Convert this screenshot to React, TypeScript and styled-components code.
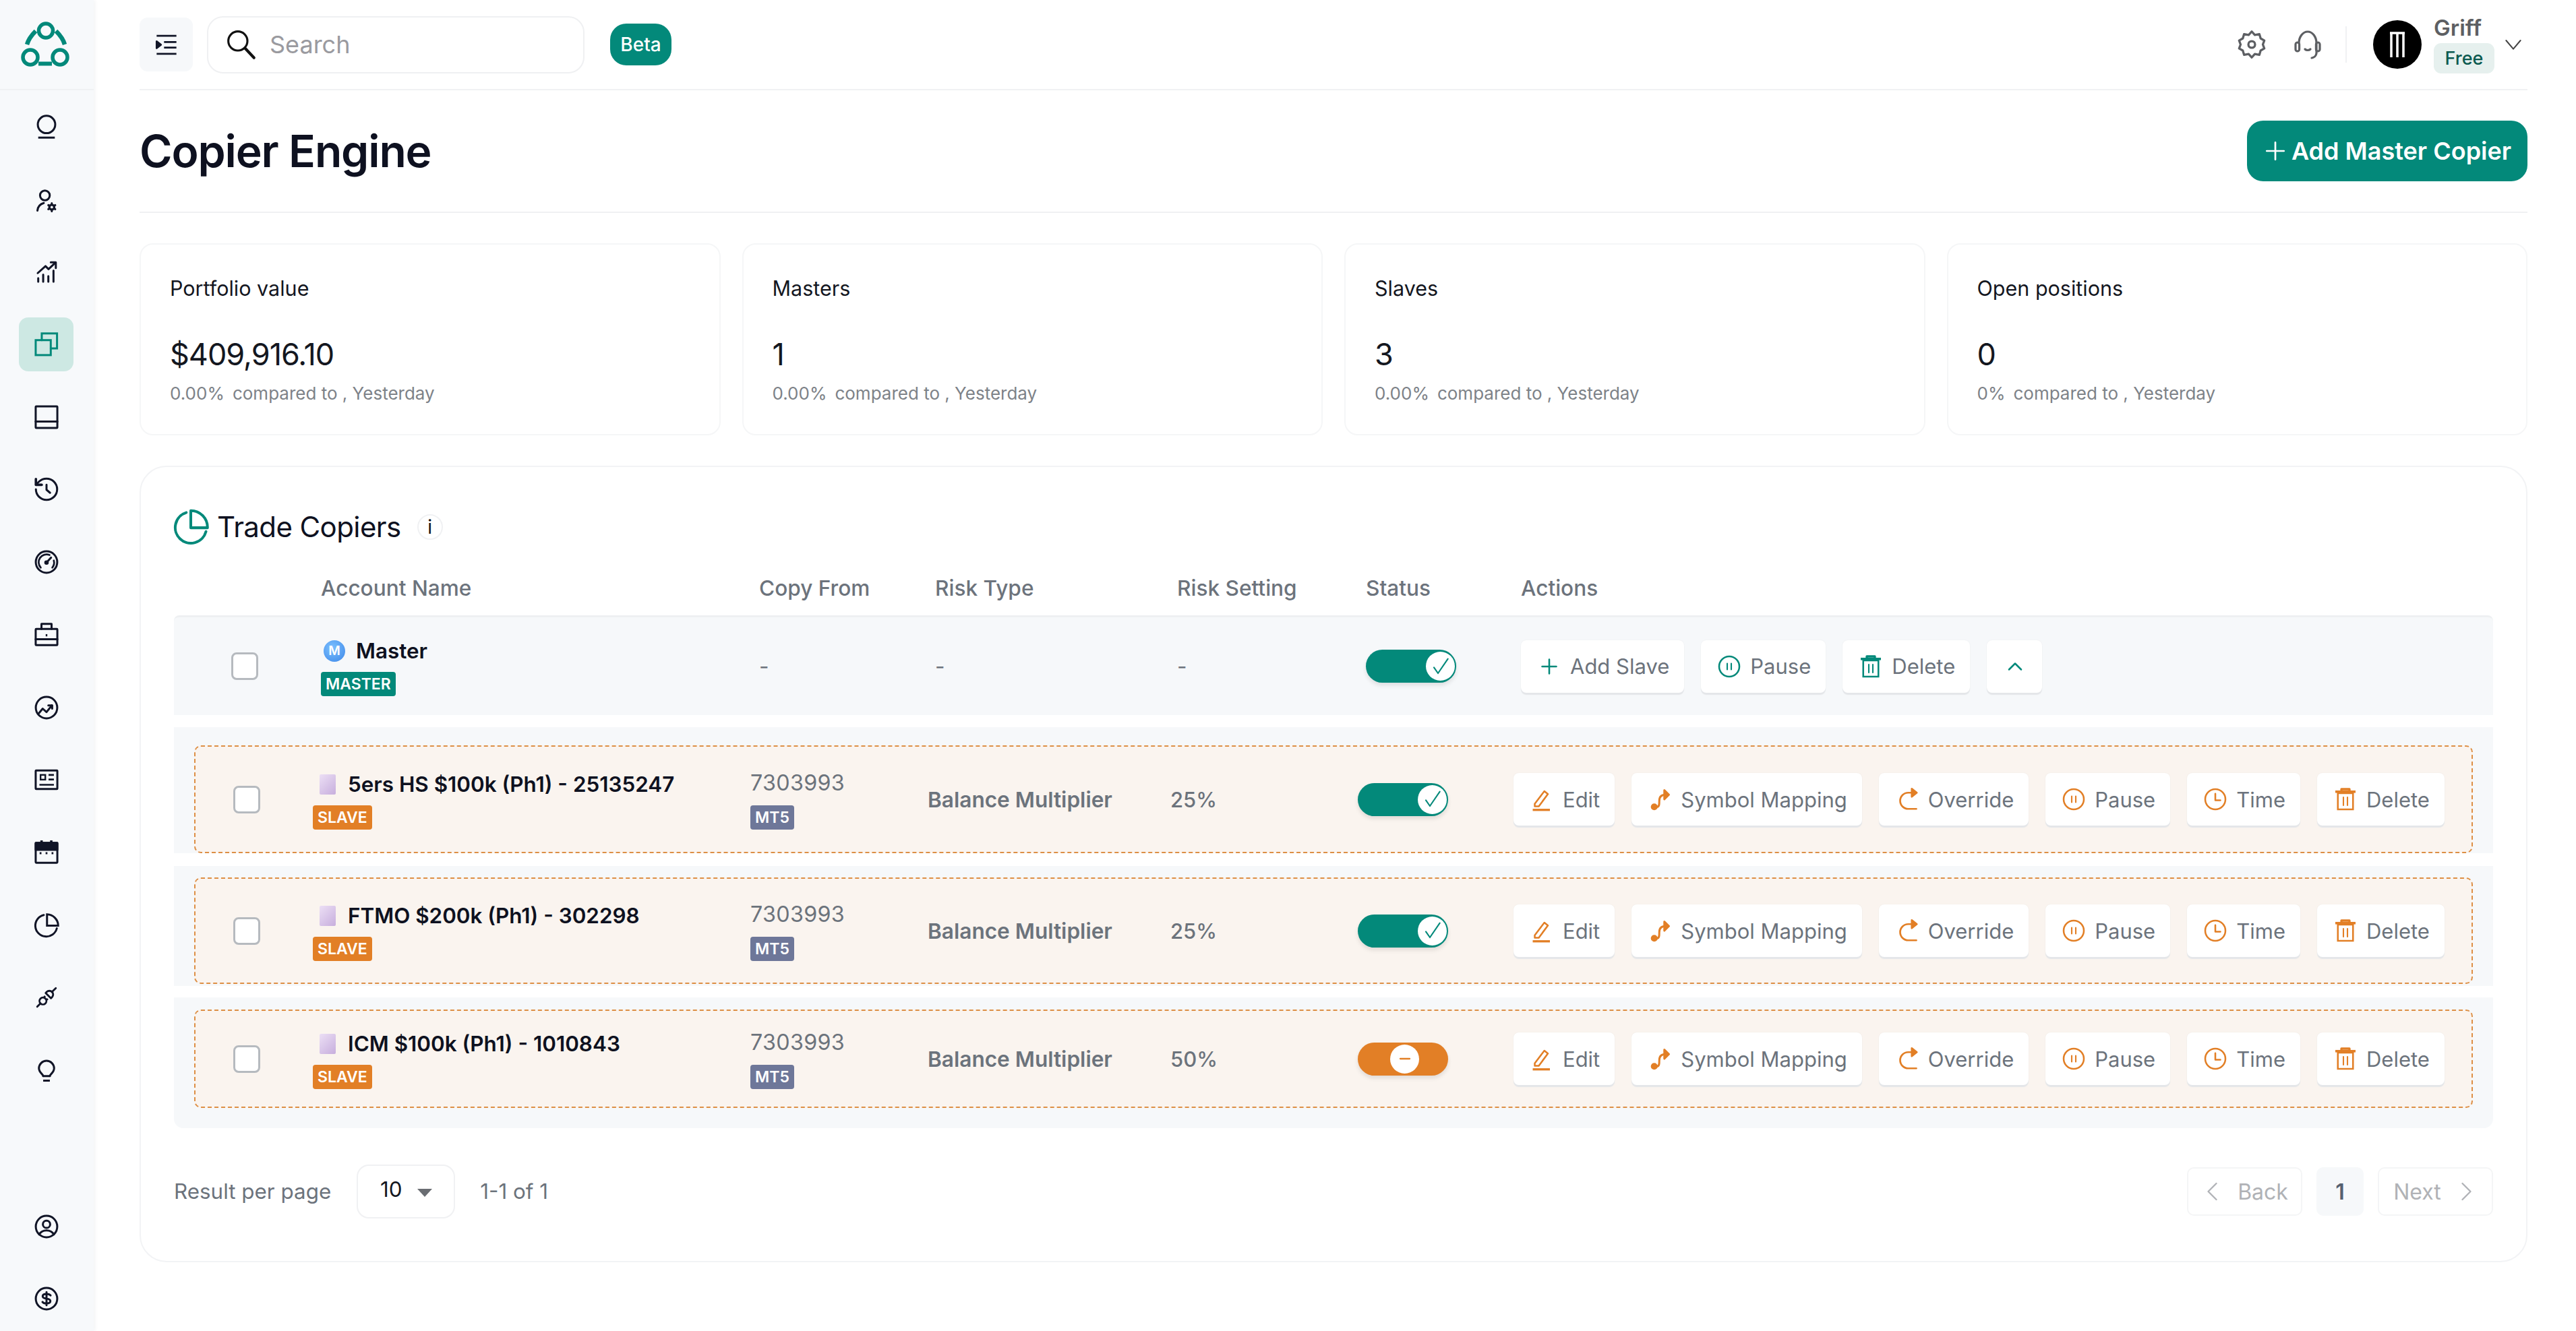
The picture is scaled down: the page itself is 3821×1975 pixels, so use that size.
import React from "react";
import styled, { createGlobalStyle } from "styled-components";

const TEAL = "#03897a";
const ORANGE = "#e27f26";
const INK = "#0e1120";
const MUTED = "#6c737c";

const Global = createGlobalStyle`
  html, body { margin: 0; padding: 0; background: #fff; }
  body { font-family: Inter, "Liberation Sans", sans-serif; color: ${INK}; }
  * { box-sizing: border-box; }
`;

const Page = styled.div`
  display: flex;
  width: 3821px;
  height: 1975px;
  overflow: hidden;
`;

const Sidebar = styled.aside`
  width: 139px;
  flex: none;
  background: #f7f9fb;
  box-shadow: 2px 0 5px rgba(20, 30, 50, 0.05);
  display: flex;
  flex-direction: column;
  align-items: center;
`;

const LogoBox = styled.div`
  width: 100%;
  height: 134px;
  flex: none;
  border-bottom: 2px solid #eff1f3;
  display: flex;
  align-items: center;
  justify-content: center;
  padding-right: 5px;
`;

const NavList = styled.nav`
  display: flex;
  flex: none;
  flex-direction: column;
  align-items: center;
  gap: 27.7px;
  margin-top: 14px;
  padding-right: 2px;
`;

const NavItem = styled.div<{ $active?: boolean; $gap?: number }>`
  width: 81px;
  height: 80px;
  margin-top: ${(p) => p.$gap ?? 0}px;
  border-radius: 14px;
  display: flex;
  align-items: center;
  justify-content: center;
  background: ${(p) => (p.$active ? "#cde8e3" : "transparent")};
  color: ${(p) => (p.$active ? TEAL : "#111527")};
`;

const Main = styled.main`
  flex: 1;
  min-width: 0;
  padding: 0 72px 0 68px;
`;

const TopBar = styled.header`
  height: 134px;
  border-bottom: 2px solid #f0f1f3;
  display: flex;
  align-items: center;
`;

const BurgerButton = styled.div`
  width: 79px;
  height: 80px;
  border-radius: 12px;
  background: #f6f8fa;
  display: flex;
  align-items: center;
  justify-content: center;
  color: #111527;
`;

const SearchBox = styled.div`
  width: 560px;
  height: 85px;
  margin-left: 21px;
  border: 2px solid #eff0f2;
  border-radius: 24px;
  display: flex;
  align-items: center;
  padding-left: 23px;
  gap: 18px;
  color: #111;
`;

const SearchText = styled.span`
  font-size: 36px;
  color: #9a9a9f;
`;

const BetaBadge = styled.span`
  width: 91px;
  height: 62px;
  margin-left: 38px;
  border-radius: 24px;
  background: ${TEAL};
  color: #fff;
  font-size: 28px;
  font-weight: 500;
  display: flex;
  align-items: center;
  justify-content: center;
`;

const TopRight = styled.div`
  margin-left: auto;
  padding-right: 5px;
  display: flex;
  align-items: center;
  color: #5d5f63;
`;

const TopIconGap = styled.div`
  width: 37px;
`;

const VLine = styled.div`
  width: 2px;
  height: 54px;
  background: #f0f1f3;
  margin: 0 39px 0 32px;
`;

const UserBlock = styled.div`
  display: flex;
  flex-direction: column;
  align-items: flex-start;
  margin-left: 18px;
`;

const UserName = styled.div`
  font-size: 33px;
  font-weight: 600;
  line-height: 34px;
  margin-bottom: 6px;
`;

const PlanBadge = styled.div`
  width: 90px;
  height: 45px;
  border-radius: 11px;
  background: #e6f0ee;
  color: #0b5a50;
  font-size: 27px;
  font-weight: 500;
  display: flex;
  align-items: center;
  justify-content: center;
`;

const ChevronBox = styled.div`
  margin-left: 12px;
  display: flex;
  color: #444;
`;

const TitleBar = styled.section`
  height: 182px;
  border-bottom: 2px solid #f0f1f3;
  display: flex;
  align-items: center;
  justify-content: space-between;
  padding-bottom: 0;
`;

const PageTitle = styled.h1`
  margin: 0;
  font-size: 66px;
  font-weight: 600;
  letter-spacing: -1.15px;
  color: ${INK};
`;

const PrimaryButton = styled.button`
  width: 416px;
  height: 90px;
  border: 0;
  border-radius: 24px;
  background: ${TEAL};
  color: #fff;
  font-family: inherit;
  font-size: 36px;
  font-weight: 600;
  display: flex;
  align-items: center;
  justify-content: center;
  gap: 6px;
`;

const StatGrid = styled.section`
  display: grid;
  grid-template-columns: repeat(4, 1fr);
  gap: 32px;
  margin-top: 45px;
`;

const StatCard = styled.div`
  height: 285px;
  border: 2px solid #f5f6f7;
  border-radius: 20px;
  padding: 45px 43px 0;
`;

const StatLabel = styled.div`
  font-size: 30.5px;
  line-height: 40px;
  color: #14171f;
`;

const StatValue = styled.div`
  font-size: 45px;
  letter-spacing: -1px;
  line-height: 60px;
  margin-top: 48px;
  color: #14171f;
`;

const StatNote = styled.div`
  font-size: 26px;
  line-height: 36px;
  margin-top: 10px;
  color: #7d8288;
  display: flex;
  gap: 12px;
`;

const Panel = styled.section`
  margin-top: 45px;
  height: 1182px;
  border: 2px solid #f2f3f5;
  border-radius: 40px;
  padding: 0 49px;
`;

const PanelHead = styled.div`
  display: flex;
  align-items: center;
  padding-top: 62px;
  height: 115px;
  margin-left: -2px;
  color: ${TEAL};
`;

const PanelTitle = styled.h2`
  margin: 0 24px 0 12px;
  font-size: 42px;
  letter-spacing: -0.6px;
  font-weight: 400;
  color: ${INK};
`;

const InfoDot = styled.div`
  width: 38px;
  height: 38px;
  border-radius: 50%;
  border: 2px solid #f0f1f3;
  color: #111;
  font-size: 28px;
  display: flex;
  align-items: center;
  justify-content: center;
`;

const HeadRow = styled.div`
  display: grid;
  grid-template-columns: 218px 650px 261px 359px 280px 230px 1fr;
  height: 105px;
  padding-top: 45px;
  font-size: 31.6px;
  font-weight: 500;
  line-height: 40px;
  color: ${MUTED};
`;

const MasterRow = styled.div`
  display: grid;
  grid-template-columns: 218px 650px 261px 359px 280px 230px 1fr;
  align-items: center;
  height: 148px;
  background: #f6f8fa;
  border-top: 3px solid #eef0f2;
  border-radius: 8px 8px 0 0;
  color: ${MUTED};
  font-size: 31.6px;
`;

const SlaveWrap = styled.div<{ $top: number; $bottom: number; $margin: number; $last?: boolean }>`
  margin-top: ${(p) => p.$margin}px;
  padding: ${(p) => p.$top}px 30px ${(p) => p.$bottom}px;
  background: #f6f8fa;
  border-radius: ${(p) => (p.$last ? "0 0 14px 14px" : "0")};
`;

const SlaveRow = styled.div<{ $height: number }>`
  display: grid;
  grid-template-columns: 174px 649px 263px 360px 278px 231px 1fr;
  align-items: center;
  height: ${(p) => p.$height}px;
  background: #faf4ef;
  border: 2px dashed #dd8f45;
  border-radius: 10px;
  color: ${MUTED};
  font-size: 31.6px;
`;

const CheckCell = styled.div<{ $offset: number }>`
  padding-left: ${(p) => p.$offset}px;
`;

const CheckBox = styled.div`
  width: 40px;
  height: 41px;
  border: 3px solid #b6babf;
  border-radius: 8px;
  background: #fff;
`;

const NameCell = styled.div`
  display: flex;
  flex-direction: column;
  align-items: flex-start;
`;

const NameLine = styled.div<{ $indent: number; $gap: number }>`
  display: flex;
  align-items: center;
  gap: ${(p) => p.$gap}px;
  padding-left: ${(p) => p.$indent}px;
  font-size: 31.4px;
  font-weight: 600;
  line-height: 44px;
  color: ${INK};
  margin-bottom: 9px;
`;

const SquareMark = styled.span`
  width: 24px;
  height: 30px;
  border-radius: 2px;
  background: linear-gradient(135deg, #ecdff5, #c7aedd);
`;

const CircleMark = styled.span`
  width: 32px;
  height: 32px;
  border-radius: 50%;
  background: radial-gradient(circle at 40% 35%, #7cc0ff, #3c87e8);
  color: #fff;
  font-size: 19px;
  font-weight: 600;
  display: flex;
  align-items: center;
  justify-content: center;
`;

const Tag = styled.span<{ $color: string }>`
  height: 36px;
  padding: 0 7px;
  border-radius: 4px;
  background: ${(p) => p.$color};
  color: #fff;
  font-size: 23px;
  font-weight: 600;
  line-height: 36px;
  display: inline-block;
`;

const CopyCell = styled.div`
  display: flex;
  flex-direction: column;
  align-items: flex-start;
  gap: 13px;
`;

const CopyId = styled.div`
  font-size: 32.3px;
  line-height: 40px;
  letter-spacing: 0.3px;
  color: ${MUTED};
`;

const RiskType = styled.div`
  font-size: 31.6px;
  font-weight: 600;
  color: ${MUTED};
`;

const RiskValue = styled.div`
  font-size: 31px;
  font-weight: 500;
  color: ${MUTED};
`;

const Toggle = styled.div<{ $color: string }>`
  position: relative;
  width: 134px;
  height: 49px;
  border-radius: 25px;
  background: ${(p) => p.$color};
  box-shadow: 0 4px 6px rgba(0, 0, 0, 0.1);
`;

const Knob = styled.div<{ $mid?: boolean; $color: string }>`
  position: absolute;
  top: 3px;
  left: ${(p) => (p.$mid ? "48px" : "89px")};
  width: 43px;
  height: 43px;
  border-radius: 50%;
  background: #fff;
  color: ${(p) => p.$color};
  display: flex;
  align-items: center;
  justify-content: center;
`;

const ActionRow = styled.div`
  display: flex;
  align-items: center;
  gap: 25px;
`;

const ActionButton = styled.button<{ $tint: string }>`
  height: 78px;
  padding: 0 22px 0 24px;
  border: 0;
  border-radius: 8px;
  background: #fff;
  box-shadow: 0 3px 1px #e4e6e9, 0 0 2px rgba(0, 0, 0, 0.06);
  font-family: inherit;
  font-size: 31px;
  white-space: nowrap;
  color: ${MUTED};
  display: flex;
  align-items: center;
  gap: 13px;
  & > svg {
    color: ${(p) => p.$tint};
    flex: none;
  }
`;

const Footer = styled.div`
  margin-top: 54px;
  height: 80px;
  display: flex;
  align-items: center;
  color: ${MUTED};
  font-size: 31.4px;
`;

const PerPage = styled.div`
  width: 146px;
  height: 80px;
  margin: 0 37px 0 38px;
  border: 2px solid #f0f1f3;
  border-radius: 18px;
  display: flex;
  align-items: center;
  justify-content: center;
  gap: 22px;
  padding-bottom: 6px;
  color: #14171f;
`;

const Caret = styled.span`
  width: 0;
  height: 0;
  margin-top: 10px;
  border-left: 11px solid transparent;
  border-right: 11px solid transparent;
  border-top: 12px solid #6a6d72;
`;

const Pager = styled.div`
  margin-left: auto;
  display: flex;
  align-items: center;
  gap: 21px;
`;

const PagerButton = styled.div`
  width: 171px;
  height: 72px;
  border: 2px solid #f4f5f6;
  border-radius: 10px;
  display: flex;
  align-items: center;
  justify-content: center;
  gap: 18px;
  color: #b0b2b6;
  font-size: 32px;
`;

const PagerCurrent = styled.div`
  width: 70px;
  height: 72px;
  border-radius: 10px;
  background: #f6f8fa;
  color: #566070;
  font-size: 32px;
  font-weight: 600;
  display: flex;
  align-items: center;
  justify-content: center;
`;

const Svg = styled.svg<{ $size: number; $w?: number }>`
  width: ${(p) => p.$w ?? p.$size}px;
  height: ${(p) => p.$size}px;
  flex: none;
  overflow: visible;
  fill: none;
  stroke: currentColor;
`;

type IP = { size?: number; sw?: number; children?: React.ReactNode };
const I = ({ size = 36, sw = 2, children }: IP) => (
  <Svg $size={size} viewBox="0 0 24 24" strokeWidth={sw} strokeLinecap="round" strokeLinejoin="round">
    {children}
  </Svg>
);

const Logo = () => (
  <Svg $size={68} $w={72} viewBox="0 0 72 68" style={{ color: TEAL }} strokeWidth={5.5}>
    <circle cx="37" cy="13.500" r="10.500" />
    <circle cx="14" cy="53" r="11" />
    <circle cx="58" cy="53" r="11" />
    <path d="M22 14C16 20 11 27 9 34" strokeWidth={6.500} />
    <path d="M52 14C58 20 63 27 65 34" strokeWidth={6.500} />
    <path d="M26 62.500H46" strokeWidth={6} />
  </Svg>
);

const navIcons: React.ReactNode[] = [
  <I key="a"><circle cx="12" cy="9.800" r="8.600" /><path d="M3.800 22.800h16.400" strokeLinecap="butt" /></I>,
  <I key="b"><circle cx="10.400" cy="8" r="4.800" /><path d="M3 23c.4-3.800 3-6.600 6.300-7.500" /><circle cx="17.200" cy="19.600" r="2.400" strokeWidth={2.200} /><path d="M17.200 15.600v1.200M17.200 22.400v1.200M13.800 17.600l1 .6M19.600 21l1 .6M13.800 21.600l1-.6M19.600 18.200l1-.6" strokeWidth={2} /></I>,
  <I key="c" sw={2}><path d="M3.300 13.500 11 6.600l3 3 6.700-6.300" /><path d="M16.200 2.900h5v5.600" /><path d="M3.800 22v-3.500M8.700 22v-7M13.800 22v-5.500M18.900 22V11" /></I>,
  <I key="d" sw={2}><rect x="1.300" y="7.800" width="14.900" height="14.800" strokeLinejoin="miter" /><path d="M7.300 7.800V1.100h15.100V16h-6.200" strokeLinejoin="miter" /></I>,
  <I key="e" sw={2}><rect x="1.300" y="1.300" width="21.400" height="21.400" rx="0.600" /><path d="M1.300 16.400h21.400" /></I>,
  <I key="f" sw={2}><path d="M1.500 12a10.500 10.500 0 1 0 10.500-10.500 11 11 0 0 0-7.700 3.200L1.500 7.500" /><path d="M1.500 1.800v5.800h5.800" strokeWidth={2.400} /><path d="M12 7.500v5l3.500 3" /></I>,
  <I key="g" sw={2}><circle cx="12" cy="12" r="10.600" /><path d="M6.300 17.500A7.800 7.800 0 0 1 15 5" strokeWidth={1.800} /><path d="M19.200 10.500a7.800 7.800 0 0 1-1.500 7" strokeWidth={1.800} /><path d="M12 12.500l4.500-5" /><circle cx="12" cy="12.500" r="1.200" fill="currentColor" /></I>,
  <I key="h" sw={2}><rect x="1.300" y="6.200" width="21.400" height="16" rx="0.600" /><path d="M7 6.200V1.200h10v5" /><path d="M1.300 16.400h21.400" /><path d="M11.200 12.400h1.600" strokeWidth={2.200} strokeLinecap="butt" /></I>,
  <I key="i" sw={2}><circle cx="12" cy="12" r="10.600" /><path d="M4.500 17.500 8.200 13l3.800 3.400 5.300-6.600" /><path d="M13.800 9.800h3.800V13" /></I>,
  <I key="j" sw={2}><rect x="1.300" y="2.900" width="21.400" height="18.200" rx="0.500" /><rect x="6.100" y="7.200" width="4.700" height="4.700" strokeWidth={1.600} strokeLinejoin="miter" /><path d="M14 7.200h5.300M14 11.700h5.300M5 17h14.300" strokeWidth={1.800} strokeLinecap="butt" /></I>,
  <I key="k" sw={2}><rect x="1.300" y="2.500" width="21.400" height="19.600" rx="0.600" /><path d="M7.100 0v3M16.700 0v3" strokeWidth={2.400} strokeLinecap="butt" /><rect x="1.300" y="2.500" width="21.400" height="6.800" fill="currentColor" /><path d="M5.200 12.700h1.800M11.100 12.700h1.800M17 12.700h1.800" strokeWidth={2} strokeLinecap="butt" /></I>,
  <I key="l" sw={2}><path d="M9.300 1.800A10.800 10.800 0 1 0 22.200 15" /><path d="M12.500 12.400V1.200A11.200 11.200 0 0 1 23.500 12.400z" strokeLinejoin="miter" /></I>,
  <I key="m" sw={1.900}>
    <g transform="rotate(-45 12 12)">
      <path d="M-1 12h4.500M19.500 12h5.500" />
      <circle cx="7" cy="12" r="3.400" />
      <path d="M10.400 10.200h1.600M10.400 13.800h1.600" strokeLinecap="butt" />
      <path d="M14.500 8.300h1.500a3.700 3.700 0 0 1 0 7.400h-1.500z" />
    </g>
  </I>,
  <I key="n" sw={2}><path d="M8.600 17.800c0-2-4.100-3.400-4.100-7.600a7.500 7.500 0 0 1 15 0c0 4.200-4.100 5.600-4.100 7.600" /><path d="M8.700 17.800h6.600M8.700 22.300h6.600" strokeLinecap="butt" /></I>,
  <I key="o" sw={2}><circle cx="12" cy="12" r="10.600" /><circle cx="12" cy="9.800" r="3.600" /><path d="M4.700 19.800c1.500-2.400 4.100-3.900 7.300-3.900s5.800 1.500 7.300 3.900" /></I>,
  <I key="p" sw={2}><circle cx="12" cy="12" r="10.600" /><path d="M16 8.800c-.6-.9-2-1.500-4-1.500-2.200 0-3.800.9-3.800 2.400s1.600 2 3.800 2.300 3.800.9 3.800 2.400-1.600 2.400-3.800 2.400c-2 0-3.400-.6-4-1.500M12 5.500v13" /></I>,
];

const PencilIcon = () => (
  <I size={36} sw={1.700}><path d="M5 16.500 14.500 4l3.500 2.800L9 19H5z" /><path d="M3 22.500h17" strokeWidth={2.200} strokeLinecap="butt" /></I>
);
const MapIcon = () => (
  <I size={36} sw={2}><circle cx="6.500" cy="19.500" r="2.400" fill="currentColor" /><path d="M9 19.500c2.500 0 2.500-2.500 2.500-6 0-3 1-6 6-6" /><path d="M16.500 3l4.500 4.500-4.500 4.500z" fill="currentColor" /></I>
);
const OverrideIcon = () => (
  <I size={36} sw={1.800}><path d="M21 21.500h-8a8 8 0 0 1 0-16h4.500" /><path d="M16.500 1.500l5 4-5 4z" fill="currentColor" /></I>
);
const PauseIcon = () => (
  <I size={36} sw={1.700}><circle cx="12" cy="12" r="10" /><path d="M10 9v6M14 9v6" strokeWidth={1.400} /></I>
);
const TimeIcon = () => (
  <I size={36} sw={1.700}><circle cx="12" cy="12" r="10" /><path d="M12 6.500V13h5" /></I>
);
const TrashIcon = () => (
  <I size={36} sw={1.700}><path d="M4.500 6h15v16h-15z" strokeLinejoin="miter" /><path d="M2 4.500h20" strokeWidth={2.400} strokeLinecap="butt" /><path d="M8 3.500V2h8v1.500" strokeWidth={2.200} strokeLinecap="butt" /><path d="M10 10v8M14 10v8" strokeWidth={1.400} /></I>
);
const PlusIcon = () => (
  <I size={36} sw={1.700}><path d="M12 5v14M5 12h14" /></I>
);
const UpIcon = () => (
  <I size={36} sw={1.700}><path d="M6 15l6-6 6 6" /></I>
);
const CheckIcon = () => (
  <I size={32} sw={1.600}><path d="M4.500 13l4.500 6.500L20 3.500" /></I>
);
const MinusIcon = () => (
  <I size={28} sw={2}><path d="M6 12h12" /></I>
);

const StatusToggle = ({ paused }: { paused?: boolean }) => (
  <Toggle $color={paused ? ORANGE : TEAL}>
    <Knob $mid={paused} $color={paused ? ORANGE : TEAL}>
      {paused ? <MinusIcon /> : <CheckIcon />}
    </Knob>
  </Toggle>
);

const stats = [
  ["Portfolio value", "$409,916.10", "0.00%"],
  ["Masters", "1", "0.00%"],
  ["Slaves", "3", "0.00%"],
  ["Open positions", "0", "0%"],
];

const slaves = [
  { name: "5ers HS $100k (Ph1) - 25135247", risk: "25%", paused: false, top: 27, bottom: 0, margin: 18, height: 160 },
  { name: "FTMO $200k (Ph1) - 302298", risk: "25%", paused: false, top: 17, bottom: 3, margin: 19, height: 158 },
  { name: "ICM $100k (Ph1) - 1010843", risk: "50%", paused: true, top: 18, bottom: 30, margin: 17, height: 146 },
];

const columns = ["", "Account Name", "Copy From", "Risk Type", "Risk Setting", "Status", "Actions"];

export default function App() {
  return (
    <Page>
      <Global />
      <Sidebar>
        <LogoBox>
          <Logo />
        </LogoBox>
        <NavList>
          {navIcons.map((icon, i) => (
            <NavItem key={i} $active={i === 3} $gap={i === 14 ? 124 : 0}>
              {icon}
            </NavItem>
          ))}
        </NavList>
      </Sidebar>
      <Main>
        <TopBar>
          <BurgerButton>
            <I size={44} sw={1.500}>
              <path d="M4 5h16M10 10h10M10 14.500h10M4 19.500h16" strokeLinecap="butt" />
              <path d="M4 9.500l3.500 2.700L4 15z" fill="currentColor" />
            </I>
          </BurgerButton>
          <SearchBox>
            <I size={50} sw={1.500}>
              <circle cx="10" cy="9.500" r="6.800" />
              <path d="M15 14.500l6.500 7" strokeWidth={2} />
            </I>
            <SearchText>Search</SearchText>
          </SearchBox>
          <BetaBadge>Beta</BetaBadge>
          <TopRight>
            <I size={44} sw={1.800}>
              <path d="M12 1.500l2.500 2.800 3.700-.7 1 3.500 3 1.700-1.200 3.200 1.200 3.200-3 1.700-1 3.500-3.700-.7-2.500 2.800-2.500-2.800-3.700.7-1-3.500-3-1.700L3 12 1.800 8.800l3-1.700 1-3.500 3.700.7z" />
              <circle cx="12" cy="12" r="2.700" />
            </I>
            <TopIconGap />
            <I size={48} sw={1.600}>
              <path d="M5.500 11a6.500 8.500 0 0 1 13 0v7.500a4 4 0 0 1-3.500 3.500" />
              <rect x="3" y="10.500" width="2.800" height="6.500" rx="1.400" />
              <rect x="18.200" y="10.500" width="2.800" height="6.500" rx="1.400" />
              <path d="M10 15.500c1 1 3 1 4 0" />
            </I>
            <VLine />
            <Svg $size={72} viewBox="0 0 72 72">
              <circle cx="36" cy="36" r="36" fill="#000" stroke="none" />
              <path d="M25 19h22M27 19v36M36 19v36M45 19v36" stroke="#fff" strokeWidth={3.500} />
            </Svg>
            <UserBlock>
              <UserName>Griff</UserName>
              <PlanBadge>Free</PlanBadge>
            </UserBlock>
            <ChevronBox>
              <I size={32} sw={1.500}>
                <path d="M4 7.500l8 9.500 8-9.500" />
              </I>
            </ChevronBox>
          </TopRight>
        </TopBar>
        <TitleBar>
          <PageTitle>Copier Engine</PageTitle>
          <PrimaryButton>
            <I size={36} sw={1.800}>
              <path d="M12 3.500v17M3.500 12h17" />
            </I>
            Add Master Copier
          </PrimaryButton>
        </TitleBar>
        <StatGrid>
          {stats.map(([label, value, pct]) => (
            <StatCard key={label}>
              <StatLabel>{label}</StatLabel>
              <StatValue>{value}</StatValue>
              <StatNote>
                <span>{pct}</span>
                <span>compared to , Yesterday</span>
              </StatNote>
            </StatCard>
          ))}
        </StatGrid>
        <Panel>
          <PanelHead>
            <I size={54} sw={1.800}>
              <path d="M9 2.500A10.300 10.300 0 1 0 22 15" />
              <path d="M12 12.500V1.200A11 11 0 0 1 23 12.500z" />
            </I>
            <PanelTitle>Trade Copiers</PanelTitle>
            <InfoDot>i</InfoDot>
          </PanelHead>
          <HeadRow>
            {columns.map((c) => (
              <div key={c}>{c}</div>
            ))}
          </HeadRow>
          <MasterRow>
            <CheckCell $offset={85}>
              <CheckBox />
            </CheckCell>
            <NameCell>
              <NameLine $indent={4} $gap={16}>
                <CircleMark>M</CircleMark>
                Master
              </NameLine>
              <Tag $color={TEAL}>MASTER</Tag>
            </NameCell>
            <div>-</div>
            <div>-</div>
            <div>-</div>
            <StatusToggle />
            <ActionRow>
              <ActionButton $tint={TEAL}><PlusIcon />Add Slave</ActionButton>
              <ActionButton $tint={TEAL}><PauseIcon />Pause</ActionButton>
              <ActionButton $tint={TEAL}><TrashIcon />Delete</ActionButton>
              <ActionButton $tint={TEAL}><UpIcon /></ActionButton>
            </ActionRow>
          </MasterRow>
          {slaves.map((s, i) => (
            <SlaveWrap key={s.name} $top={s.top} $bottom={s.bottom} $margin={s.margin} $last={i === 2}>
              <SlaveRow $height={s.height}>
                <CheckCell $offset={56}>
                  <CheckBox />
                </CheckCell>
                <NameCell>
                  <NameLine $indent={10} $gap={18}>
                    <SquareMark />
                    {s.name}
                  </NameLine>
                  <Tag $color={ORANGE}>SLAVE</Tag>
                </NameCell>
                <CopyCell>
                  <CopyId>7303993</CopyId>
                  <Tag $color="#6e7799">MT5</Tag>
                </CopyCell>
                <RiskType>Balance Multiplier</RiskType>
                <RiskValue>{s.risk}</RiskValue>
                <StatusToggle paused={s.paused} />
                <ActionRow>
                  <ActionButton $tint={ORANGE}><PencilIcon />Edit</ActionButton>
                  <ActionButton $tint={ORANGE}><MapIcon />Symbol Mapping</ActionButton>
                  <ActionButton $tint={ORANGE}><OverrideIcon />Override</ActionButton>
                  <ActionButton $tint={ORANGE}><PauseIcon />Pause</ActionButton>
                  <ActionButton $tint={ORANGE}><TimeIcon />Time</ActionButton>
                  <ActionButton $tint={ORANGE}><TrashIcon />Delete</ActionButton>
                </ActionRow>
              </SlaveRow>
            </SlaveWrap>
          ))}
          <Footer>
            <span>Result per page</span>
            <PerPage>
              <span>10</span>
              <Caret />
            </PerPage>
            <span>1-1 of 1</span>
            <Pager>
              <PagerButton>
                <I size={36} sw={1.500}><path d="M15 4l-8 8 8 8" /></I>
                Back
              </PagerButton>
              <PagerCurrent>1</PagerCurrent>
              <PagerButton>
                Next
                <I size={36} sw={1.500}><path d="M9 4l8 8-8 8" /></I>
              </PagerButton>
            </Pager>
          </Footer>
        </Panel>
      </Main>
    </Page>
  );
}
